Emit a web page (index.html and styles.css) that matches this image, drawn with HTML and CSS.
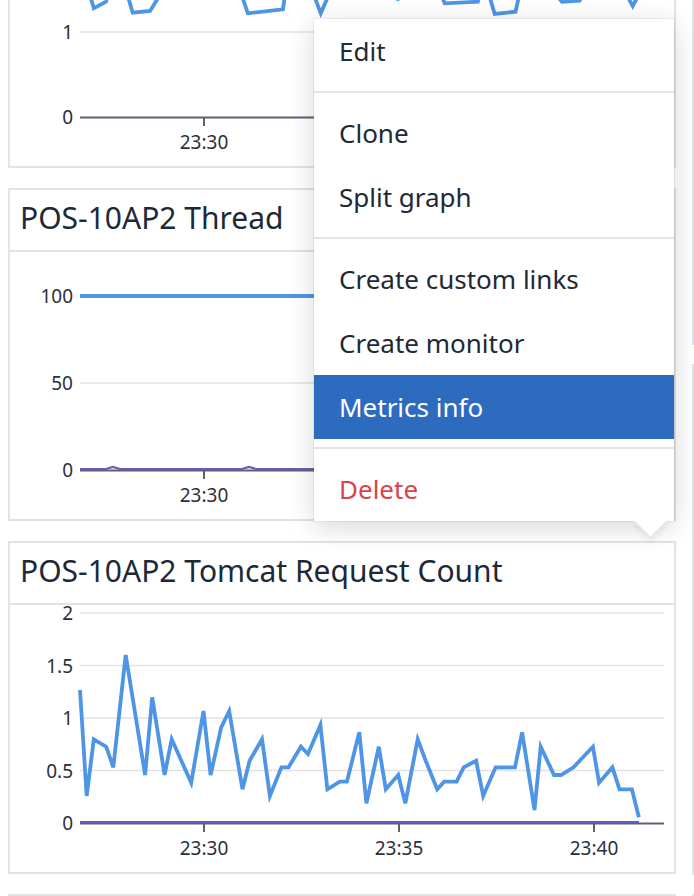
FILE: index.html
```html
<!DOCTYPE html>
<html lang="en">
<head>
<meta charset="utf-8">
<title>Dashboard</title>
<link rel="stylesheet" href="styles.css">
</head>
<body>
<div class="board">
  <div class="col">
    <section class="panel">
      <div class="panel-head"></div>
      <div class="chart">
        <svg viewBox="0 0 664 267" width="664" height="267">
          <line class="grid" x1="70" y1="133" x2="654" y2="133"/>
          <text class="ylab" x="63" y="140">1</text>
          <text class="ylab" x="63" y="225">0</text>
          <polyline class="series" points="70,81 80,96 83.8,109.3 96,102.7 102,81 116,91 122.7,113.7 140,112 150,96 160,81 230,91 237.8,114.3 273,110.3 275,96 290,81 305,99 310.8,114.3 317.4,99 330,81 388,100 400,81 432.5,99 434.7,104.3 467.9,102.7 472,81 480,99 484.7,115 505.5,112.7 508.6,99 520,81 549.7,100 552,102.7 569.6,101.7 580,81 618.3,99 622.7,107 627,99 635,81 654,91"/>
          <line class="axis" x1="70" y1="218.5" x2="654" y2="218.5"/>
          <line class="tick" x1="194" y1="218" x2="194" y2="227"/>
          <text class="xlab" x="194" y="249.5">23:30</text>
        </svg>
      </div>
    </section>
    <section class="panel">
      <h2 class="panel-head">POS-10AP2 Thread</h2>
      <div class="chart">
        <svg viewBox="0 0 664 267" width="664" height="267">
          <line class="grid" x1="70" y1="131" x2="654" y2="131"/>
          <text class="ylab" x="63" y="51">100</text>
          <text class="ylab" x="63" y="138">50</text>
          <text class="ylab" x="63" y="225">0</text>
          <line class="series" x1="70" y1="44" x2="654" y2="44"/>
          <line class="axis" x1="70" y1="218.5" x2="654" y2="218.5"/>
          <polyline class="series2" points="70,217 96,217 103,215 110,217 232,217 239,215 246,217 654,217"/>
          <line class="tick" x1="194" y1="218" x2="194" y2="227"/>
          <text class="xlab" x="194" y="249.5">23:30</text>
        </svg>
      </div>
    </section>
    <section class="panel">
      <h2 class="panel-head">POS-10AP2 Tomcat Request Count</h2>
      <div class="chart">
        <svg viewBox="0 0 664 267" width="664" height="267">
          <line class="grid" x1="70" y1="8" x2="654" y2="8"/>
          <line class="grid" x1="70" y1="60.5" x2="654" y2="60.5"/>
          <line class="grid" x1="70" y1="113" x2="654" y2="113"/>
          <line class="grid" x1="70" y1="165.5" x2="654" y2="165.5"/>
          <text class="ylab" x="63" y="15">2</text>
          <text class="ylab" x="63" y="67.5">1.5</text>
          <text class="ylab" x="63" y="120">1</text>
          <text class="ylab" x="63" y="172.5">0.5</text>
          <text class="ylab" x="63" y="225">0</text>
          <polyline class="series" points="70,85 76.7,191 83.8,134.3 96.2,141.7 103.3,162.3 115.7,50 135.1,170 142.2,92.3 154.6,170 161.7,134.3 181.2,177.7 193.5,106 200.6,170 211.2,122.3 219.2,106 232.5,184.3 239.6,155.7 252,134.3 259.9,191 271.4,162.3 278.5,162.3 290.9,141.7 298,149 310.4,120 317.4,184.3 329.8,176.7 336.9,176.7 349.3,127.3 356.4,198.3 368.8,141.7 375.8,184.3 388.2,170 395.3,198.3 407.7,134.3 415.7,155.7 427.2,184.3 434.2,176.7 446.6,176.7 453.7,162.3 466.1,155.7 473.2,191 485.6,162.3 505,162.3 512.1,127.3 524.5,205 530.7,141.7 544,170 551.1,170 563.5,162.3 582.9,141.7 589.1,177.7 602.4,162.3 609.5,184.3 621.9,184.3 628.9,212.3"/>
          <line class="axis" x1="70" y1="218.5" x2="654" y2="218.5"/>
          <line class="series2" x1="70" y1="217" x2="629" y2="217"/>
          <line class="tick" x1="194" y1="218" x2="194" y2="227"/>
          <line class="tick" x1="389" y1="218" x2="389" y2="227"/>
          <line class="tick" x1="584" y1="218" x2="584" y2="227"/>
          <text class="xlab" x="194" y="249.5">23:30</text>
          <text class="xlab" x="389" y="249.5">23:35</text>
          <text class="xlab" x="584" y="249.5">23:40</text>
        </svg>
      </div>
    </section>
    <section class="panel"></section>
  </div>
  <div class="col col-right">
    <section class="panel panel-tall"></section>
    <section class="panel panel-tall2"></section>
    <section class="panel"></section>
  </div>
</div>

<div class="menu">
  <ul class="menu-list">
    <li class="menu-item">Edit</li>
    <li class="menu-sep"></li>
    <li class="menu-item">Clone</li>
    <li class="menu-item">Split graph</li>
    <li class="menu-sep"></li>
    <li class="menu-item">Create custom links</li>
    <li class="menu-item">Create monitor</li>
    <li class="menu-item active">Metrics info</li>
    <li class="menu-sep"></li>
    <li class="menu-item danger">Delete</li>
  </ul>
</div>
</body>
</html>
```
FILE: styles.css
```css
html {
  overflow: hidden;
}

body {
  margin: 0;
  background: #ffffff;
  font-family: "Noto Sans", "Open Sans", sans-serif;
  color: #1d2936;
}

.board {
  display: flex;
  gap: 16px;
  padding-left: 8px;
  margin-top: -165px;
  height: 1061px;
  overflow: hidden;
}

.col {
  display: flex;
  flex-direction: column;
  gap: 20px;
  width: 668px;
  flex: none;
}

.col-right {
  gap: 19px;
}

.panel {
  border: 2px solid #e0e3e9;
  background: #ffffff;
  height: 333px;
  box-sizing: border-box;
  display: flex;
  flex-direction: column;
  flex: none;
}

.panel-tall {
  height: 510px;
}

.panel-tall2 {
  height: 511px;
}

.panel-head {
  margin: 0;
  height: 62px;
  flex: none;
  box-sizing: border-box;
  border-bottom: 2px solid #e0e3e9;
  padding: 0 10px 4px;
  line-height: 56px;
  font-size: 30px;
  font-weight: 400;
  white-space: nowrap;
  color: #1d2936;
}

.chart svg {
  display: block;
  width: 664px;
  height: 267px;
  overflow: visible;
}

.grid {
  stroke: #e2e2e4;
  stroke-width: 1.5;
}

.axis {
  stroke: #5c6170;
  stroke-width: 2;
}

.tick {
  stroke: #5c6170;
  stroke-width: 2;
}

.series {
  fill: none;
  stroke: #4f95e5;
  stroke-width: 3.8;
  stroke-linejoin: miter;
}

.series2 {
  fill: none;
  stroke: #6a5bb8;
  stroke-width: 2.2;
}

.ylab {
  font-family: "Noto Sans", "Open Sans", sans-serif;
  font-size: 19px;
  fill: #2a3138;
  text-anchor: end;
}

.xlab {
  font-family: "Noto Sans", "Open Sans", sans-serif;
  font-size: 19px;
  fill: #2a3138;
  text-anchor: middle;
}

.menu {
  position: absolute;
  left: 314px;
  top: 19px;
  width: 360px;
  background: #ffffff;
  box-shadow: 0 6px 26px rgba(0, 0, 0, 0.16), 0 0 0 1px rgba(0, 0, 0, 0.05);
  z-index: 10;
}

.menu::after {
  content: "";
  position: absolute;
  width: 24px;
  height: 24px;
  left: 324px;
  bottom: -12px;
  background: #ffffff;
  border-right: 1px solid #dde0e6;
  border-bottom: 1px solid #dde0e6;
  transform: rotate(45deg);
  box-shadow: 3px 3px 6px rgba(0, 0, 0, 0.06);
}

.menu-list {
  list-style: none;
  margin: 0;
  padding: 0;
  background: #ffffff;
  position: relative;
  z-index: 1;
}

.menu-item {
  height: 64px;
  line-height: 64px;
  padding: 0 25px;
  font-size: 26px;
  white-space: nowrap;
  color: #1d2936;
}

.menu-item.active {
  background: #2d6bbf;
  color: #ffffff;
}

.menu-item.danger {
  color: #d9434a;
}

.menu-sep {
  height: 2px;
  margin: 8px 0;
  background: #e1e4ea;
}
```
